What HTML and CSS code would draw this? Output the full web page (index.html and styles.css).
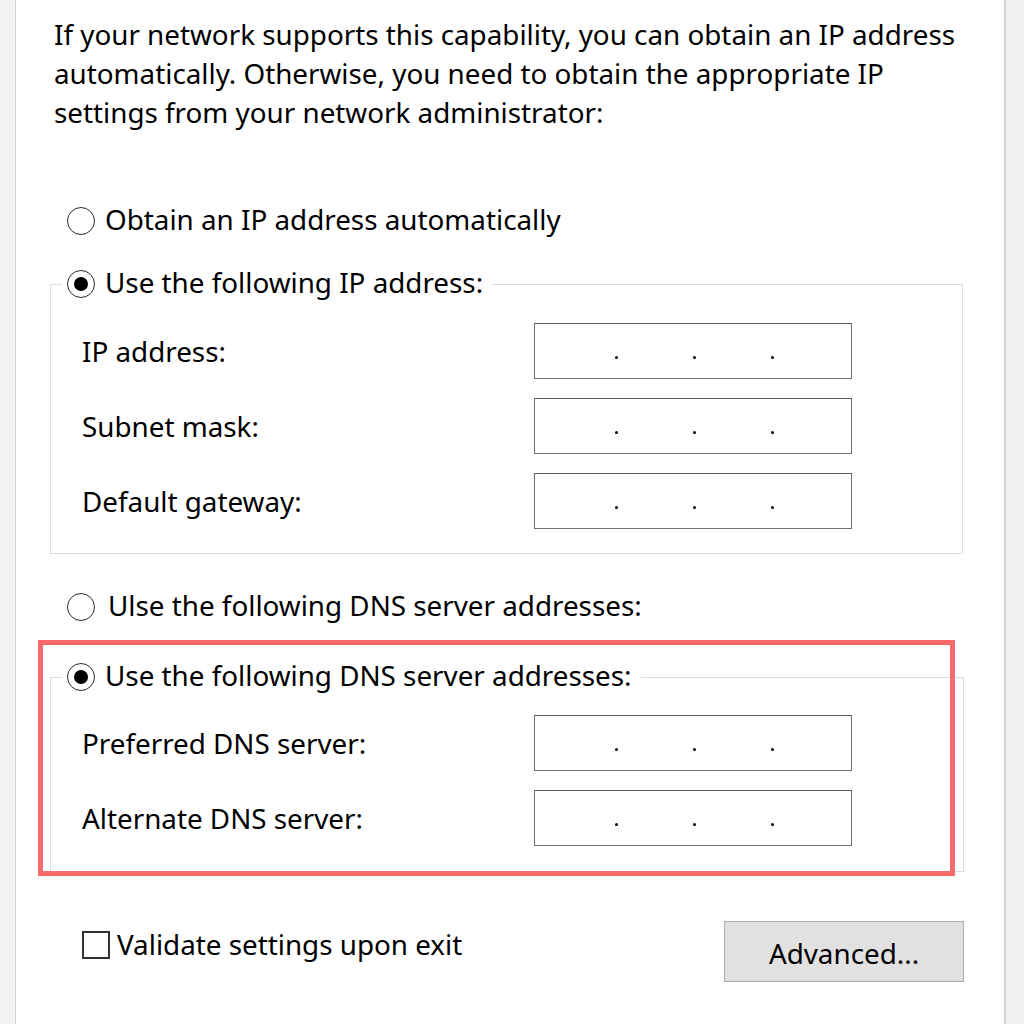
FILE: index.html
```html
<!DOCTYPE html>
<html lang="en">
<head>
<meta charset="utf-8">
<title>IP settings</title>
<link rel="stylesheet" href="styles.css">
</head>
<body>
<div class="window">
  <div class="side-left"></div>
  <div class="main">
    <p class="intro">If your network supports this capability, you can obtain an IP address automatically. Otherwise, you need to obtain the appropriate IP settings from your network administrator:</p>

    <div class="radio-row first">
      <span class="radio"></span>
      <span class="radio-text">Obtain an IP address automatically</span>
    </div>

    <fieldset class="group ip-group">
      <legend class="legend">
        <span class="radio checked"></span>
        <span class="radio-text">Use the following IP address:</span>
      </legend>
      <div class="rows">
        <div class="row">
          <span class="label">IP address:</span>
          <span class="ipbox"><i class="dot"></i><i class="dot"></i><i class="dot"></i></span>
        </div>
        <div class="row">
          <span class="label">Subnet mask:</span>
          <span class="ipbox"><i class="dot"></i><i class="dot"></i><i class="dot"></i></span>
        </div>
        <div class="row">
          <span class="label">Default gateway:</span>
          <span class="ipbox"><i class="dot"></i><i class="dot"></i><i class="dot"></i></span>
        </div>
      </div>
    </fieldset>

    <div class="radio-row dns-auto">
      <span class="radio"></span>
      <span class="radio-text wide">Ulse the following DNS server addresses:</span>
    </div>

    <div class="highlight-wrap">
      <fieldset class="group dns-group">
        <legend class="legend">
          <span class="radio checked"></span>
          <span class="radio-text">Use the following DNS server addresses:</span>
        </legend>
        <div class="rows dns-rows">
          <div class="row">
            <span class="label">Preferred DNS server:</span>
            <span class="ipbox"><i class="dot"></i><i class="dot"></i><i class="dot"></i></span>
          </div>
          <div class="row">
            <span class="label">Alternate DNS server:</span>
            <span class="ipbox"><i class="dot"></i><i class="dot"></i><i class="dot"></i></span>
          </div>
        </div>
      </fieldset>
      <div class="highlight"></div>
    </div>

    <div class="footer">
      <div class="check-row">
        <span class="checkbox"></span>
        <span class="check-text">Validate settings upon exit</span>
      </div>
      <div class="button">Advanced...</div>
    </div>
  </div>
  <div class="side-right"></div>
</div>
</body>
</html>
```

FILE: styles.css
```css
html, body {
  margin: 0;
  padding: 0;
  background: #ffffff;
}

body {
  font-family: "Noto Sans", "Open Sans", "DejaVu Sans", sans-serif;
  color: #000000;
  font-size: 27.8px;
}

.window {
  display: flex;
  width: 1024px;
  height: 1024px;
  overflow: hidden;
}

.side-left {
  width: 15px;
  background: #f2f2f2;
  border-right: 1px solid #d0d0d0;
  flex: none;
}

.side-right {
  width: 18px;
  background: #f1f1f1;
  border-left: 2px solid #d6d6d6;
  flex: none;
}

.main {
  flex: 1;
  background: #ffffff;
  padding-top: 15px;
  box-sizing: border-box;
}

.intro {
  margin: 0 0 0 38px;
  width: 925px;
  line-height: 39px;
}

.radio-row {
  display: flex;
  align-items: center;
  height: 40px;
  margin-left: 51px;
}

.radio-row.first {
  margin-top: 69px;
}

.radio-row.dns-auto {
  margin-top: 33px;
}

.radio {
  box-sizing: border-box;
  width: 28px;
  height: 28px;
  border: 1.6px solid #2b2b2b;
  border-radius: 50%;
  background: #ffffff;
  flex: none;
  display: flex;
  align-items: center;
  justify-content: center;
}

.radio.checked::after {
  content: "";
  width: 14px;
  height: 14px;
  border-radius: 50%;
  background: #000000;
}

.radio-text {
  margin-left: 10px;
  white-space: nowrap;
  position: relative;
  top: -2px;
}

.radio-text.wide {
  margin-left: 13px;
}

.group {
  margin: 23px 41px 0 34px;
  padding: 0 0 24px 11px;
  border: 1px solid #dcdcdc;
  min-width: 0;
}

.legend {
  display: flex;
  align-items: center;
  height: 40px;
  padding: 0 9px 0 5px;
}

.rows {
  display: flex;
  flex-direction: column;
  gap: 19px;
  margin-top: 19px;
  padding: 0 110px 0 20px;
}

.row {
  display: flex;
  align-items: center;
  justify-content: space-between;
}

.label {
  white-space: nowrap;
}

.ipbox {
  box-sizing: border-box;
  width: 318px;
  height: 56px;
  border: 1px solid #707070;
  border-top-color: #5a5a5a;
  background: #ffffff;
  display: flex;
  gap: 75px;
  padding: 32px 0 0 80px;
}

.dot {
  width: 3px;
  height: 3px;
  border-radius: 50%;
  background: #000000;
  flex: none;
}

.highlight-wrap {
  position: relative;
  margin-top: 30px;
}

.dns-group {
  margin-top: 0;
  margin-right: 40px;
  padding-bottom: 25px;
}

.dns-rows {
  margin-top: 18px;
  padding-right: 111px;
}

.highlight {
  position: absolute;
  left: 22px;
  top: -17px;
  width: 917px;
  height: 236px;
  box-sizing: border-box;
  border: 5px solid #fa6a6a;
  pointer-events: none;
}

.footer {
  display: flex;
  justify-content: space-between;
  align-items: flex-start;
  margin: 49px 40px 0 66px;
}

.check-row {
  display: flex;
  align-items: center;
  height: 48px;
}

.checkbox {
  box-sizing: border-box;
  width: 28px;
  height: 28px;
  border: 2px solid #333333;
  background: #ffffff;
  flex: none;
}

.check-text {
  margin-left: 7px;
  white-space: nowrap;
  position: relative;
  top: -1px;
}

.button {
  box-sizing: border-box;
  width: 240px;
  height: 61px;
  background: #e1e1e1;
  border: 1px solid #adadad;
  display: flex;
  align-items: center;
  justify-content: center;
  padding-top: 2px;
}
```
